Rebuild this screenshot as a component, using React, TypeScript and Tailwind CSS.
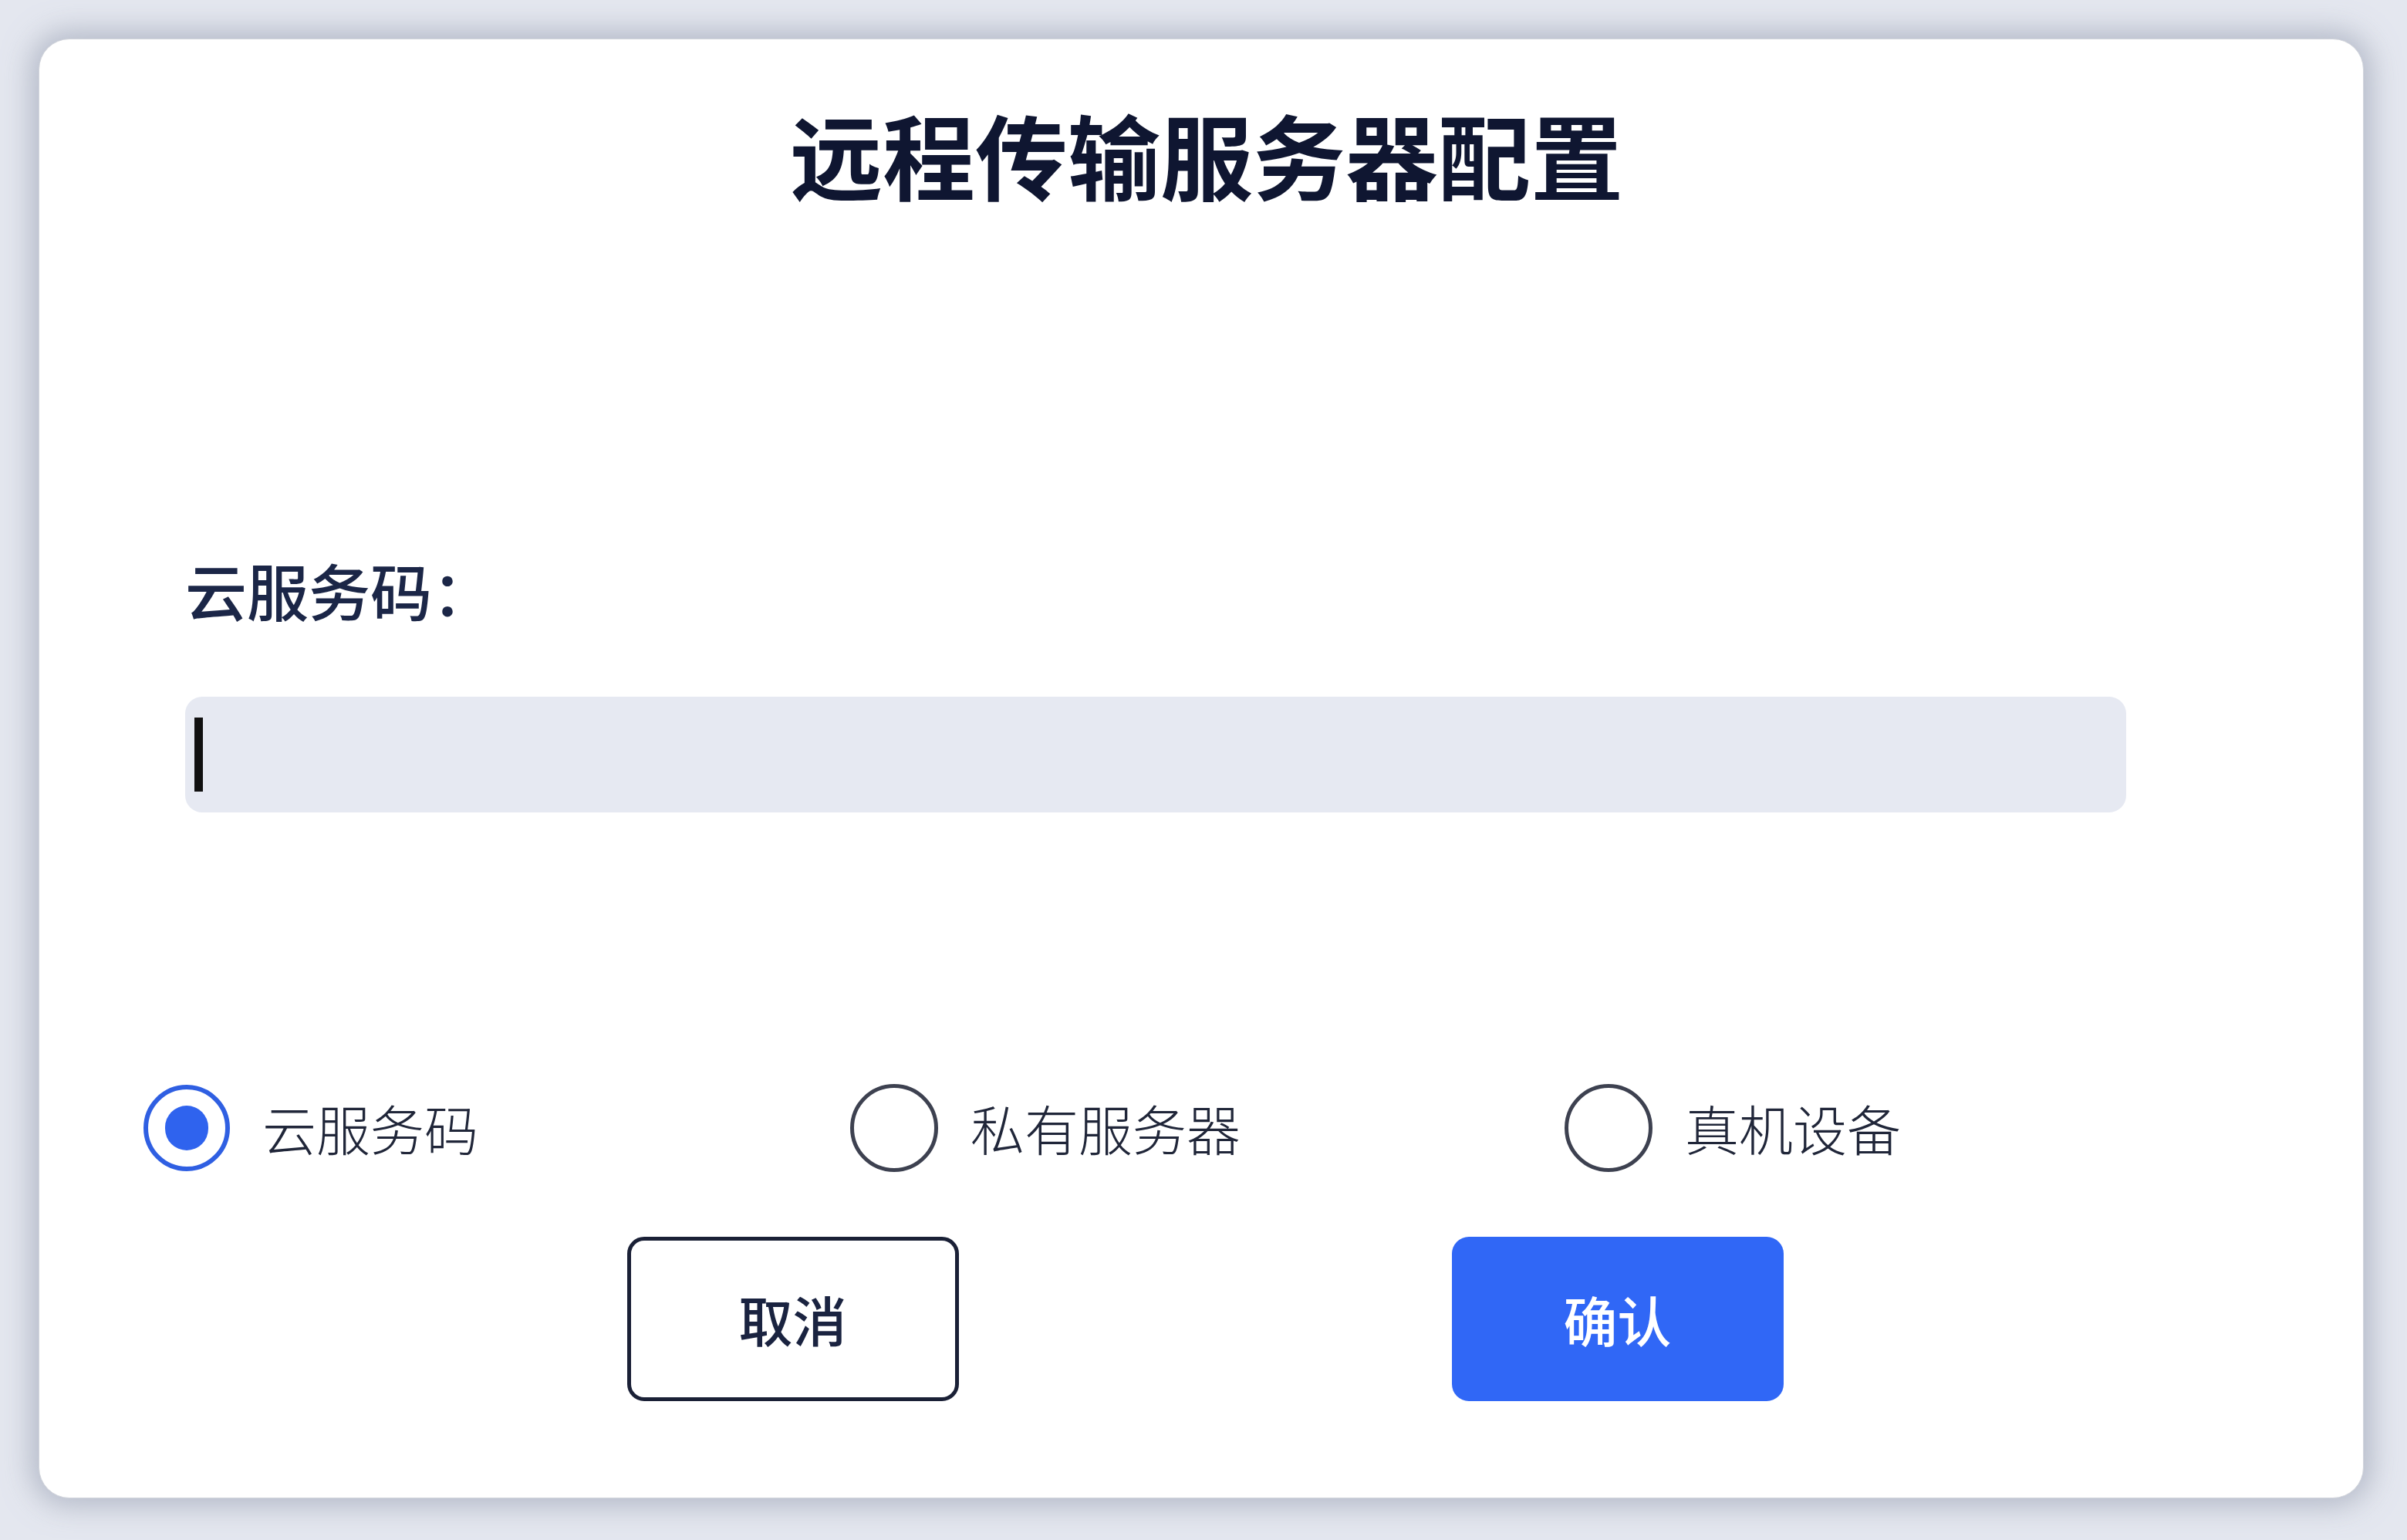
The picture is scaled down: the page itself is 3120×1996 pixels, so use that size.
import { useState } from "react";

const options = [
  { id: "cloud", label: "云服务码" },
  { id: "private", label: "私有服务器" },
  { id: "device", label: "真机设备" },
];

export default function App() {
  const [mode, setMode] = useState("cloud");

  return (
    <div
      className="h-[1996px] w-full bg-[#e4e7ef] pt-[50px] pb-[54px] pl-[50px] pr-[56px] flex"
      style={{ fontFamily: '"Noto Sans CJK SC", "Noto Sans", sans-serif' }}
    >
      <div className="flex-1 flex flex-col rounded-[40px] bg-white border border-[#d2d5dc] shadow-[0_0_36px_10px_rgba(160,166,184,0.7)] pt-[88px]">
        {/* Title */}
        <h1 className="text-center pl-[14px] text-[120px] leading-none font-bold text-[#0f1631]">
          远程传输服务器配置
        </h1>

        {/* Cloud code field */}
        <div className="mt-[464px] pl-[189px]">
          <label className="block text-[80px] leading-none font-medium text-[#1b2647]">
            云服务码：
          </label>
          <div className="mt-[100px] w-[2516px] h-[150px] rounded-[22px] bg-[#e6e9f2] flex items-center pl-[12px]">
            <span className="block w-[11px] h-[96px] bg-[#111111]" />
          </div>
        </div>

        {/* Mode selector */}
        <div className="mt-[352px] pl-[135px] grid grid-cols-[916px_926px_922px]">
          {options.map((opt) => {
            const active = mode === opt.id;
            return (
              <button
                key={opt.id}
                onClick={() => setMode(opt.id)}
                className="flex items-center gap-[42px] text-left"
              >
                <span
                  className={
                    active
                      ? "w-[112px] h-[112px] rounded-full border-[6px] border-[#2f5fe2] flex items-center justify-center"
                      : "w-[114px] h-[114px] rounded-full border-[5px] border-[#3d4150] flex items-center justify-center"
                  }
                >
                  {active && <span className="block w-[56px] h-[58px] rounded-full bg-[#2f63ee]" />}
                </span>
                <span className="text-[70px] leading-none font-light text-[#202639]">{opt.label}</span>
              </button>
            );
          })}
        </div>

        {/* Actions */}
        <div className="mt-[84px] pl-[10px] flex justify-center gap-[639px]">
          <button className="w-[430px] h-[213px] rounded-[22px] border-[5px] border-[#1a2036] bg-white text-[70px] leading-none font-medium text-[#1a2340]">
            取消
          </button>
          <button className="w-[430px] h-[213px] rounded-[22px] bg-[#3067f6] text-[70px] leading-none font-medium text-white">
            确认
          </button>
        </div>
      </div>
    </div>
  );
}
